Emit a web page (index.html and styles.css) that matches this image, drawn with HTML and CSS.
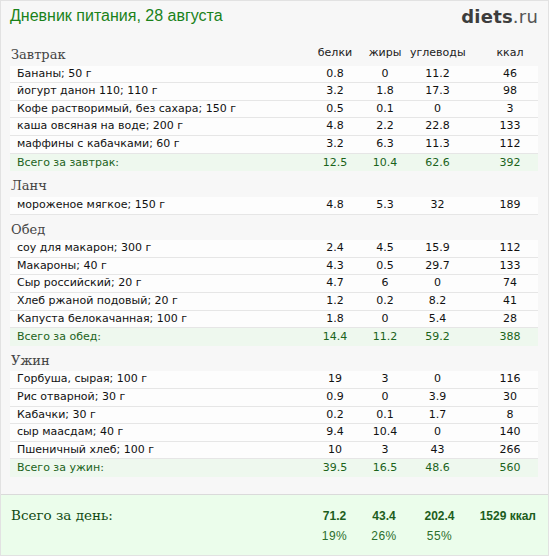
FILE: index.html
```html
<!DOCTYPE html>
<html lang="ru">
<head>
<meta charset="utf-8">
<title>Дневник питания</title>
<link rel="stylesheet" href="styles.css">
</head>
<body>
<div class="page">
  <div class="top">
    <div class="title">Дневник питания, 28 августа</div>
    <div class="logo"><b>diets</b>.ru</div>
  </div>

  <div class="sec-head">
    <div class="sec-name">Завтрак</div>
    <div class="col-h">белки</div>
    <div class="col-h">жиры</div>
    <div class="col-h">углеводы</div>
    <div class="col-h col-k">ккал</div>
  </div>
  <div class="row"><div class="name">Бананы; 50 г</div><div>0.8</div><div>0</div><div>11.2</div><div class="k">46</div></div>
  <div class="row"><div class="name">йогурт данон 110; 110 г</div><div>3.2</div><div>1.8</div><div>17.3</div><div class="k">98</div></div>
  <div class="row"><div class="name">Кофе растворимый, без сахара; 150 г</div><div>0.5</div><div>0.1</div><div>0</div><div class="k">3</div></div>
  <div class="row"><div class="name">каша овсяная на воде; 200 г</div><div>4.8</div><div>2.2</div><div>22.8</div><div class="k">133</div></div>
  <div class="row"><div class="name">маффины с кабачками; 60 г</div><div>3.2</div><div>6.3</div><div>11.3</div><div class="k">112</div></div>
  <div class="row total"><div class="name">Всего за завтрак:</div><div>12.5</div><div>10.4</div><div>62.6</div><div class="k">392</div></div>

  <div class="sec-head"><div class="sec-name">Ланч</div></div>
  <div class="row"><div class="name">мороженое мягкое; 150 г</div><div>4.8</div><div>5.3</div><div>32</div><div class="k">189</div></div>

  <div class="sec-head"><div class="sec-name">Обед</div></div>
  <div class="row"><div class="name">соу для макарон; 300 г</div><div>2.4</div><div>4.5</div><div>15.9</div><div class="k">112</div></div>
  <div class="row"><div class="name">Макароны; 40 г</div><div>4.3</div><div>0.5</div><div>29.7</div><div class="k">133</div></div>
  <div class="row"><div class="name">Сыр российский; 20 г</div><div>4.7</div><div>6</div><div>0</div><div class="k">74</div></div>
  <div class="row"><div class="name">Хлеб ржаной подовый; 20 г</div><div>1.2</div><div>0.2</div><div>8.2</div><div class="k">41</div></div>
  <div class="row"><div class="name">Капуста белокачанная; 100 г</div><div>1.8</div><div>0</div><div>5.4</div><div class="k">28</div></div>
  <div class="row total"><div class="name">Всего за обед:</div><div>14.4</div><div>11.2</div><div>59.2</div><div class="k">388</div></div>

  <div class="sec-head"><div class="sec-name">Ужин</div></div>
  <div class="row"><div class="name">Горбуша, сырая; 100 г</div><div>19</div><div>3</div><div>0</div><div class="k">116</div></div>
  <div class="row"><div class="name">Рис отварной; 30 г</div><div>0.9</div><div>0</div><div>3.9</div><div class="k">30</div></div>
  <div class="row"><div class="name">Кабачки; 30 г</div><div>0.2</div><div>0.1</div><div>1.7</div><div class="k">8</div></div>
  <div class="row"><div class="name">сыр маасдам; 40 г</div><div>9.4</div><div>10.4</div><div>0</div><div class="k">140</div></div>
  <div class="row"><div class="name">Пшеничный хлеб; 100 г</div><div>10</div><div>3</div><div>43</div><div class="k">266</div></div>
  <div class="row total"><div class="name">Всего за ужин:</div><div>39.5</div><div>16.5</div><div>48.6</div><div class="k">560</div></div>

  <div class="day">
    <div class="day-grid">
      <div class="day-label">Всего за день:</div>
      <div class="num">71.2</div>
      <div class="num">43.4</div>
      <div class="num">202.4</div>
      <div class="num last">1529 ккал</div>
      <div></div>
      <div class="pct">19%</div>
      <div class="pct">26%</div>
      <div class="pct">55%</div>
      <div></div>
    </div>
  </div>
</div>
</body>
</html>
```

FILE: styles.css
```css
html, body {
  margin: 0;
  padding: 0;
  background: #ffffff;
}

.page {
  box-sizing: border-box;
  width: 549px;
  height: 556px;
  background: #f7f7f7;
  border: 1px solid #e2e2e2;
  font-family: "DejaVu Sans", Verdana, sans-serif;
  font-size: 11px;
  color: #111;
  overflow: hidden;
}

.top {
  height: 39px;
  display: flex;
  justify-content: space-between;
  align-items: flex-start;
  padding: 0 10px 0 9px;
  box-sizing: border-box;
}

.title {
  font-family: "Liberation Sans", Arial, sans-serif;
  font-size: 16px;
  line-height: 18px;
  color: #1a821a;
  padding-top: 6px;
}

.logo {
  font-family: "DejaVu Sans", Verdana, sans-serif;
  font-size: 18px;
  line-height: 22px;
  color: #555;
  padding-top: 5px;
  letter-spacing: 0.2px;
}

.logo b {
  color: #3d3d3d;
  font-weight: bold;
}

.sec-head,
.row {
  display: grid;
  grid-template-columns: 300px 50px 50px 55px 72px;
  margin: 0 10px 0 9px;
}

.sec-head {
  height: 25.7px;
  box-sizing: border-box;
  align-items: end;
  padding-bottom: 2.5px;
}

.sec-name {
  font-family: "DejaVu Serif", Georgia, serif;
  font-size: 13px;
  line-height: 16px;
  color: #444;
  padding-left: 1px;
}

.col-h {
  text-align: center;
  line-height: 16px;
  color: #222;
  padding-bottom: 2px;
}

.col-k {
  padding-left: 18px;
}

.row {
  height: 17.6px;
  box-sizing: border-box;
  line-height: 16.6px;
  background: #fdfdfd;
  border-bottom: 1px solid #e6e6e6;
  text-align: center;
}

.row .name {
  text-align: left;
  padding-left: 7px;
  white-space: nowrap;
}

.row .k {
  padding-left: 18px;
}

.row.total {
  background: #eef8ee;
  border-bottom: none;
  line-height: 17.6px;
  color: #1b631b;
}

.day {
  margin-top: 16.8px;
  border-top: 1px solid #dadada;
  background: #ebfdeb;
  height: 61px;
  box-sizing: border-box;
  padding: 12.5px 10px 0 9px;
}

.day-grid {
  display: grid;
  grid-template-columns: 300px 49px 50px 61px 67px;
  row-gap: 4px;
  align-items: baseline;
}

.day-label {
  font-family: "DejaVu Serif", Georgia, serif;
  font-size: 13.5px;
  line-height: 16px;
  color: #124a12;
  padding-left: 1px;
}

.num {
  font-family: "Liberation Sans", Arial, sans-serif;
  font-weight: bold;
  font-size: 12px;
  line-height: 16px;
  color: #1d5e1d;
  text-align: center;
}

.num.last {
  text-align: right;
  padding-right: 1px;
}

.pct {
  font-family: "Liberation Sans", Arial, sans-serif;
  font-size: 12px;
  line-height: 16px;
  color: #2c6e2c;
  text-align: center;
  letter-spacing: 0.5px;
}
```
